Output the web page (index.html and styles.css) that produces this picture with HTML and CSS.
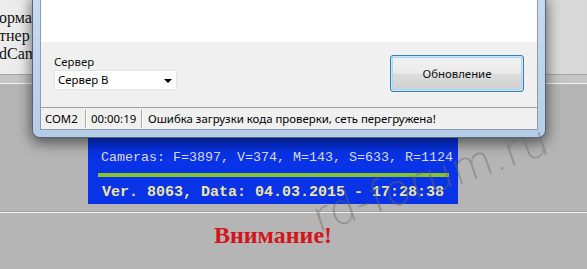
FILE: index.html
```html
<!DOCTYPE html>
<html lang="ru">
<head>
<meta charset="utf-8">
<title>RdCam</title>
<link rel="stylesheet" href="styles.css">
</head>
<body>
<div class="page">
  <div class="header">
    <div class="hline">ормация</div>
    <div class="hline">тнер</div>
    <div class="hline">dCamera</div>
  </div>
  <div class="band"></div>
  <div class="main">
    <div class="bluebox">
      <div class="cams">Cameras: F=3897, V=374, M=143, S=633, R=1124</div>
      <div class="greenbar"></div>
      <div class="ver">Ver. 8063, Data: 04.03.2015 - 17:28:38</div>
    </div>
    <div class="rule"></div>
    <div class="warning">Внимание!</div>
  </div>
</div>

<div class="window">
  <div class="client">
    <div class="whitearea"></div>
    <div class="panel">
      <div class="server">
        <div class="label">Сервер</div>
        <div class="combo"><span>Сервер B</span><span class="arrow"></span></div>
      </div>
      <button class="btn">Обновление</button>
    </div>
    <div class="status">
      <div class="cell c1">COM2</div>
      <div class="sep"></div>
      <div class="cell c2">00:00:19</div>
      <div class="sep"></div>
      <div class="cell c3">Ошибка загрузки кода проверки, сеть перегружена!</div>
    </div>
  </div>
</div>

<div class="watermark">rd-forum.ru</div>
</body>
</html>
```
FILE: styles.css
```css
* { box-sizing: border-box; }
html, body { margin: 0; padding: 0; }
body {
  width: 587px;
  height: 269px;
  overflow: hidden;
  position: relative;
  background: #b5b5b5;
  font-family: "Noto Sans", "DejaVu Sans", sans-serif;
}

.header {
  height: 74px;
  padding-top: 9px;
  background: linear-gradient(to right, #ececec, #e2e2e2 50%, #d8d8d8);
  font-family: "Liberation Serif", serif;
  font-size: 16px;
  line-height: 18px;
  color: #111;
}
.hline { margin-left: -1px; white-space: nowrap; }

.band {
  height: 10px;
  border-top: 1px solid #a6a6a6;
  border-bottom: 1px solid #f4f4f4;
  background: #c5c5c5;
}

.main {
  width: 546px;
  display: flex;
  flex-direction: column;
  align-items: center;
  padding-top: 40px;
}

.bluebox {
  width: 370px;
  height: 80px;
  background: #0833e6;
  padding: 24px 9px 0 10px;
}
.cams {
  font-family: "Liberation Mono", monospace;
  font-size: 13.333px;
  line-height: 20px;
  color: #dcdce8;
  padding-left: 3px;
  white-space: nowrap;
}
.greenbar {
  height: 4px;
  margin-top: 5px;
  background: #86c22a;
}
.ver {
  margin-top: 6px;
  font-family: "Liberation Mono", monospace;
  font-weight: bold;
  font-size: 15px;
  line-height: 20px;
  color: #ece4a6;
  padding-left: 4px;
  white-space: nowrap;
}

.rule {
  width: 587px;
  align-self: flex-start;
  margin-top: 7px;
  height: 2px;
  border-top: 1px solid #a4a4a4;
  border-bottom: 1px solid #efefef;
}
.warning {
  margin-top: 8px;
  font-family: "Liberation Serif", serif;
  font-weight: bold;
  font-size: 24px;
  line-height: 28px;
  color: #d4141a;
}

/* dialog window */
.window {
  position: absolute;
  left: 33px;
  top: -4px;
  width: 512px;
  height: 141px;
  padding: 0 7px 7px 7px;
  background: linear-gradient(to bottom, #c9dbef, #b7cce6);
  border-radius: 0 0 7px 7px;
  box-shadow: 0 0 0 1px #55657a, 0 4px 14px 2px rgba(0,0,0,0.55);
}
.client {
  height: 100%;
  border: 1px solid #8a9cb3;
  border-top: none;
  background: #f0f0f0;
  display: flex;
  flex-direction: column;
}
.whitearea {
  height: 46px;
  background: #fff;
}
.panel {
  height: 65px;
  display: flex;
  justify-content: space-between;
  padding: 0 13px 0 13px;
  font-size: 11.4px;
}
.server { padding-top: 12px; }
.label {
  line-height: 15px;
  color: #111;
}
.combo {
  margin-top: 1px;
  width: 123px;
  height: 20px;
  background: #fff;
  border: 1px solid #e2e3ea;
  display: flex;
  align-items: center;
  justify-content: space-between;
  padding: 0 4px 0 3px;
  line-height: 16px;
  color: #000;
}
.arrow {
  width: 0;
  height: 0;
  border-left: 4px solid transparent;
  border-right: 4px solid transparent;
  border-top: 4px solid #000;
  margin-top: 1px;
}
.btn {
  margin-top: 13px;
  width: 134px;
  height: 37px;
  border: 1px solid #3d7bad;
  border-radius: 3px;
  background: linear-gradient(to bottom, #f2f2f2 0%, #ebebeb 48%, #dddddd 52%, #cfcfcf 100%);
  box-shadow: inset 0 0 0 1px #c4e5f6, inset 0 0 0 2px #a7d9f5;
  font-family: "Noto Sans", "DejaVu Sans", sans-serif;
  font-size: 11.4px;
  color: #111;
  padding: 0;
}

.status {
  flex: 1;
  border-top: 1px solid #a0a0a0;
  display: flex;
  align-items: center;
  font-size: 11.4px;
  color: #000;
  padding-left: 4px;
  white-space: nowrap;
}
.cell { line-height: 16px; }
.c1 { width: 40px; }
.c2 { width: 54px; padding-left: 4px; }
.c3 { padding-left: 5px; }
.sep {
  width: 2px;
  height: 18px;
  border-left: 1px solid #a8a8a8;
  border-right: 1px solid #ffffff;
}

.watermark {
  position: absolute;
  left: 318px;
  top: 194px;
  transform: rotate(-19deg);
  transform-origin: 0 38px;
  font-family: "DejaVu Sans", sans-serif;
  font-weight: 200;
  font-size: 43px;
  line-height: 48px;
  color: rgba(105,105,105,0.45);
  white-space: nowrap;
  pointer-events: none;
}
```
